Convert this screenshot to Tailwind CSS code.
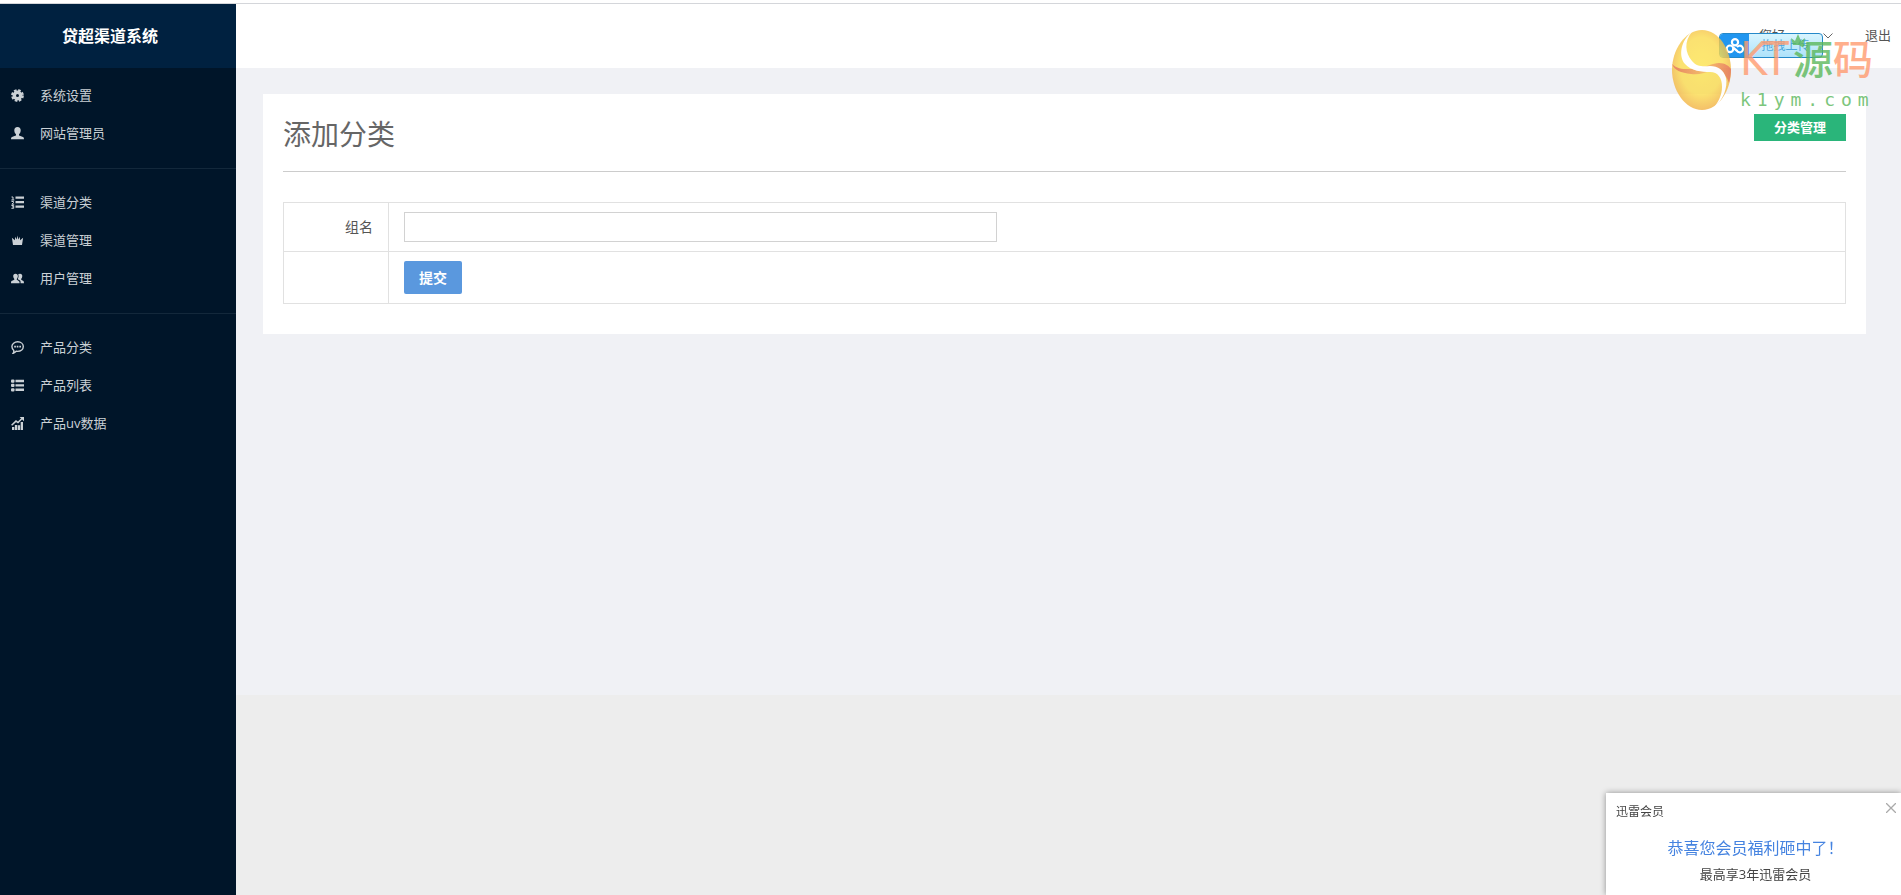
<!DOCTYPE html>
<html lang="zh-CN">
<head>
    <meta charset="UTF-8">
    <meta name="viewport" content="width=device-width, initial-scale=1.0">
    <title>贷超渠道系统</title>
    <script src="https://cdn.jsdelivr.net/npm/@tailwindcss/browser@4"></script>
    <style>
        body {
            font-family: 'Open Sans', 'Noto Sans CJK SC', sans-serif;
        }
    </style>
</head>
<body class="min-h-screen flex flex-col bg-[#ededed] text-[13px] text-[#555]">
    <div class="h-1 bg-white border-b border-[#d4d6da]"></div>
    <div class="flex flex-1">
        <!-- sidebar -->
        <aside class="w-[236px] shrink-0 bg-[#001529] text-[#cbd1d6]">
            <div class="h-16 flex items-center justify-center bg-[#002140] pr-4">
                <span class="text-base font-bold text-white">贷超渠道系统</span>
            </div>
            <nav>
                <ul class="pt-2 pb-4">
                    <li><a href="#" class="flex items-center h-[38px] pt-px pl-[11px] gap-4">
                        <svg class="size-[13px]" viewBox="0 0 13 13" fill="none" stroke="currentColor"><circle cx="6.5" cy="6.5" r="3.2" stroke-width="3.4"/><circle cx="6.5" cy="6.5" r="5.2" stroke-width="2.4" stroke-dasharray="2.5 1.584"/></svg>
                        系统设置</a></li>
                    <li><a href="#" class="flex items-center h-[38px] pt-px pl-[11px] gap-4">
                        <svg class="size-[13px]" viewBox="0 0 13 13" fill="currentColor"><path d="M6.5 0C4.3 0 3.3 1.3 3.3 3.200c0 1.800.8 3.200 1.700 4v1.300C4.400 9 1.600 9.400.6 10.300 0 10.800 0 12.300 0 12.300h13s0-1.500-.6-2C11.400 9.400 8.600 9 8 8.500V7.200c.9-.8 1.700-2.200 1.700-4C9.700 1.300 8.700 0 6.500 0z"/></svg>
                        网站管理员</a></li>
                </ul>
                <ul class="border-t border-[#13283b] pt-3.5 pb-4">
                    <li><a href="#" class="flex items-center h-[38px] pt-px pl-[11px] gap-4">
                        <svg class="size-[13px]" viewBox="0 0 13 13" fill="currentColor"><path d="M4.500.5H13v2.300H4.500zM4.500 5H13v2.300H4.500zM4.500 9.500H13v2.300H4.500z"/><path d="M.5 1H2v3M.3 4h3M.5 5.500h2v1.200L.8 8.200h2.400M.4 9.500h2.300v2.800H.4M1 10.900h1.700" fill="none" stroke="currentColor"/></svg>
                        渠道分类</a></li>
                    <li><a href="#" class="flex items-center h-[38px] pt-px pl-[11px] gap-4">
                        <svg class="size-[13px]" viewBox="0 0 13 13" fill="currentColor"><path d="M2 11 1 4.300.9 3.700l3 2.500.3-3.500 1.500 2.900L6.500 1.500l.8 4.100 1.500-2.900.3 3.500 3-2.500L11 11z"/></svg>
                        渠道管理</a></li>
                    <li><a href="#" class="flex items-center h-[38px] pt-px pl-[11px] gap-4">
                        <svg class="size-[13px]" viewBox="0 0 13 13" fill="currentColor"><path d="M4.500 1.700C2.900 1.700 2.200 2.800 2.200 4.100c0 1.200.6 2.300 1.100 2.900v.8C2.800 8.300.9 8.600.3 9.200 0 9.600 0 11.200 0 11.200h8.600s0-1.400-.4-1.800C7.700 8.700 6.300 8.300 5.800 7.800V7c.5-.6 1.100-1.700 1.100-2.900 0-1.300-.8-2.400-2.400-2.400z"/><path d="M9 1.700c-.9 0-1.500.3-1.800.9.6 1.400.4 3.100-.4 4.400l.3.600c1.100.4 2 .8 2.300 1.500.2.600.2 2.100.2 2.100H13s0-1.400-.4-1.900c-.5-.6-1.900-1-2.400-1.500V7c.5-.6 1.100-1.700 1.100-2.900C11.300 2.800 10.600 1.700 9 1.700z"/></svg>
                        用户管理</a></li>
                </ul>
                <ul class="border-t border-[#13283b] pt-3.5 pb-4">
                    <li><a href="#" class="flex items-center h-[38px] pt-px pl-[11px] gap-4">
                        <svg class="size-[13px]" viewBox="0 0 13 13" fill="none" stroke="currentColor" stroke-width="1.400"><path d="M6.700.8c3.200 0 5.600 2.100 5.600 4.800s-2.400 4.800-5.600 4.800c-.5 0-1 0-1.500-.1-.8.9-1.800 1.600-3 1.900.5-.8.7-1.700.6-2.700C1.600 8.500.9 7.100.9 5.600.9 2.900 3.500.8 6.700.8z"/><path d="M3.200 5.700h1.700M5.700 5.700h1.700M8.300 5.700H10" stroke-width="1.800"/></svg>
                        产品分类</a></li>
                    <li><a href="#" class="flex items-center h-[38px] pt-px pl-[11px] gap-4">
                        <svg class="size-[13px]" viewBox="0 0 13 13" fill="currentColor"><path d="M4.500.8H13v2.400H4.500zM4.500 5.200H13v2.400H4.500zM4.500 9.600H13V12H4.500z"/><rect y=".4" width="3.500" height="3.300" rx="1"/><rect y="4.800" width="3.500" height="3.300" rx="1"/><rect y="9.200" width="3.500" height="3.300" rx="1"/></svg>
                        产品列表</a></li>
                    <li><a href="#" class="flex items-center h-[38px] pt-px pl-[11px] gap-4">
                        <svg class="size-[13px]" viewBox="0 0 13 13" fill="currentColor"><path d="M1 10h2.300v3H1zM3.900 8h2.300v5H3.900zM6.800 8.300h2.300V13H6.800zM9.700 5H12v8H9.700z"/><path d="M.6 8.300 5 4.100l2 1.500L11 1.500" fill="none" stroke="currentColor" stroke-width="1.500"/><path d="M8.600 0H13v4.200z"/></svg>
                        产品uv数据</a></li>
                </ul>
            </nav>
        </aside>

        <div class="flex-1 min-w-0">
            <header class="h-16 bg-white flex items-center justify-end pr-2.5">
                <button type="button" class="flex items-center gap-[38px]">
                    <span>您好</span>
                    <svg class="w-2.5 h-1.5" viewBox="0 0 10 6" fill="none" stroke="#666"><path d="M.5.5 5 5 9.500.5"/></svg>
                </button>
                <a href="#" class="ml-8">退出</a>
            </header>

            <main class="min-h-[70vh] bg-[#f0f1f5] pt-[26px] pl-[27px] pr-[35px]">
                <section class="bg-white px-5 pt-5 pb-[30px]">
                    <div class="flex justify-between items-start border-b border-[#ccc] h-[58px]">
                        <h1 class="text-[28px] leading-10 text-[#666]">添加分类</h1>
                        <a href="#" class="bg-[#2ab57a] text-white font-bold w-[92px] h-[27px] flex items-center justify-center">分类管理</a>
                    </div>
                    <form onsubmit="return false">
                        <table class="mt-[30px] w-full border-collapse">
                            <tr>
                                <td class="w-[105px] h-[49px] border border-[#e1e1e1] pr-[15px] text-right"><label for="groupName" class="text-sm">组名</label></td>
                                <td class="border border-[#e1e1e1] px-[15px]"><input type="text" id="groupName" class="block w-1/2 max-w-[593px] h-[30px] border border-[#d2d2d2] px-2"></td>
                            </tr>
                            <tr>
                                <td class="h-[52px] border border-[#e1e1e1]"></td>
                                <td class="border border-[#e1e1e1] px-[15px]"><button type="submit" class="block w-[58px] h-[33px] rounded-xs bg-[#5a98de] text-white text-sm font-bold">提交</button></td>
                            </tr>
                        </table>
                    </form>
                </section>
            </main>
        </div>
    </div>

    <!-- drag upload widget -->
    <button type="button" class="absolute top-[33px] right-[78px] w-[104px] h-[25px] flex rounded-sm border border-[#2589c9] bg-linear-to-b from-[#d8f4fe] to-[#aee2fa] overflow-hidden">
        <span class="w-[29px] h-full bg-[#2196f0] flex items-center justify-center">
            <svg class="w-5 h-4" viewBox="0 0 20 16" fill="none" stroke="#fff" stroke-width="2.200"><circle cx="10" cy="4.300" r="3.100"/><circle cx="5" cy="10.800" r="3.300"/><path d="M12 9.200a3.300 3.300 0 1 1 0 3.600L8 9.300"/></svg>
        </span>
        <span class="flex-1 text-xs leading-6 text-[#4aa6dc]">拖拽上传</span>
    </button>

    <!-- site logo overlay -->
    <div class="absolute top-[30px] right-[28px] flex gap-2 pointer-events-none opacity-80">
        <svg class="w-[60px] h-20" viewBox="0 0 60 80">
            <defs>
                <radialGradient id="egg" cx=".5" cy=".45" r=".6"><stop offset="0" stop-color="#fde44e"/><stop offset=".6" stop-color="#fbdb4e"/><stop offset="1" stop-color="#efa640"/></radialGradient>
                <linearGradient id="foldLeft" x1="0" y1="0" x2="1" y2="0"><stop offset="0" stop-color="#e5683f"/><stop offset="1" stop-color="#f7c04a"/></linearGradient>
                <linearGradient id="foldRight" x1="0" y1="0" x2="1" y2="0"><stop offset="0" stop-color="#f7c04a"/><stop offset="1" stop-color="#e5683f"/></linearGradient>
            </defs>
            <path d="M30 0c17 0 29 20 29 40S47 80 30 80 0 60 0 40 13 0 30 0z" fill="url(#egg)"/>
            <path d="M0 34c6 6 14 5 20 5 6 2 12 2 18 2-6 2-11 4-19 3C9 43 2 40 0 34z" fill="url(#foldLeft)"/>
            <path d="M28 37c8 0 12-4 19-4 6 0 10 3 12 6 0 5-1 10-2 14-3-10-10-15-29-16z" fill="url(#foldRight)"/>
            <path d="M20 2C9 10 6 26 13 34c6 7 17 8 25 8 8 0 12 6 12 15 0 8-4 16-8 20 9-6 14-20 12-29-2-8-8-12-16-12-8 1-14 0-18-5C13 23 12 11 20 2z" fill="#fff"/>
        </svg>
        <div class="w-[133px]">
            <div class="h-[58px] flex items-center text-[40px] leading-[58px] text-[#ff9c70]">
                <span class="w-[54px] text-[46px] font-['DejaVu_Sans_Condensed','DejaVu_Sans']">KT</span><span class="font-medium text-[#5cb85c]">源</span><span class="font-medium">码</span>
            </div>
            <div class="mt-0.5 text-lg leading-[20px] tracking-[6px] whitespace-nowrap text-[#5cb85c] font-['DejaVu_Sans_Mono']">k1ym.com</div>
        </div>
        <svg class="absolute left-[119px] top-1 w-3.5 h-3" viewBox="0 0 14 12" fill="#5cb85c"><path d="m2 11-2-7 4 3 3-7 3 7 4-3-2 7z"/></svg>
    </div>

    <!-- member popup -->
    <aside class="fixed right-0 bottom-0 w-[295px] h-[102px] bg-white shadow-[0_0_6px_rgba(0,0,0,0.4)] text-center">
        <div class="flex justify-between items-start pt-2.5 pl-2.5 pr-[5px] text-xs leading-[18px] text-[#444]">
            <span>迅雷会员</span>
            <button type="button" aria-label="关闭"><svg class="size-2.5" viewBox="0 0 10 10" stroke="#aaa" stroke-width="1.300"><path d="m0 0 10 10M10 0 0 10"/></svg></button>
        </div>
        <a href="#" class="block pt-[15px] pl-1 text-base leading-6 text-[#4583e0]">恭喜您会员福利砸中了！</a>
        <p class="pt-1 pl-1 leading-5 text-[#444]">最高享3年迅雷会员</p>
    </aside>
</body>
</html>
